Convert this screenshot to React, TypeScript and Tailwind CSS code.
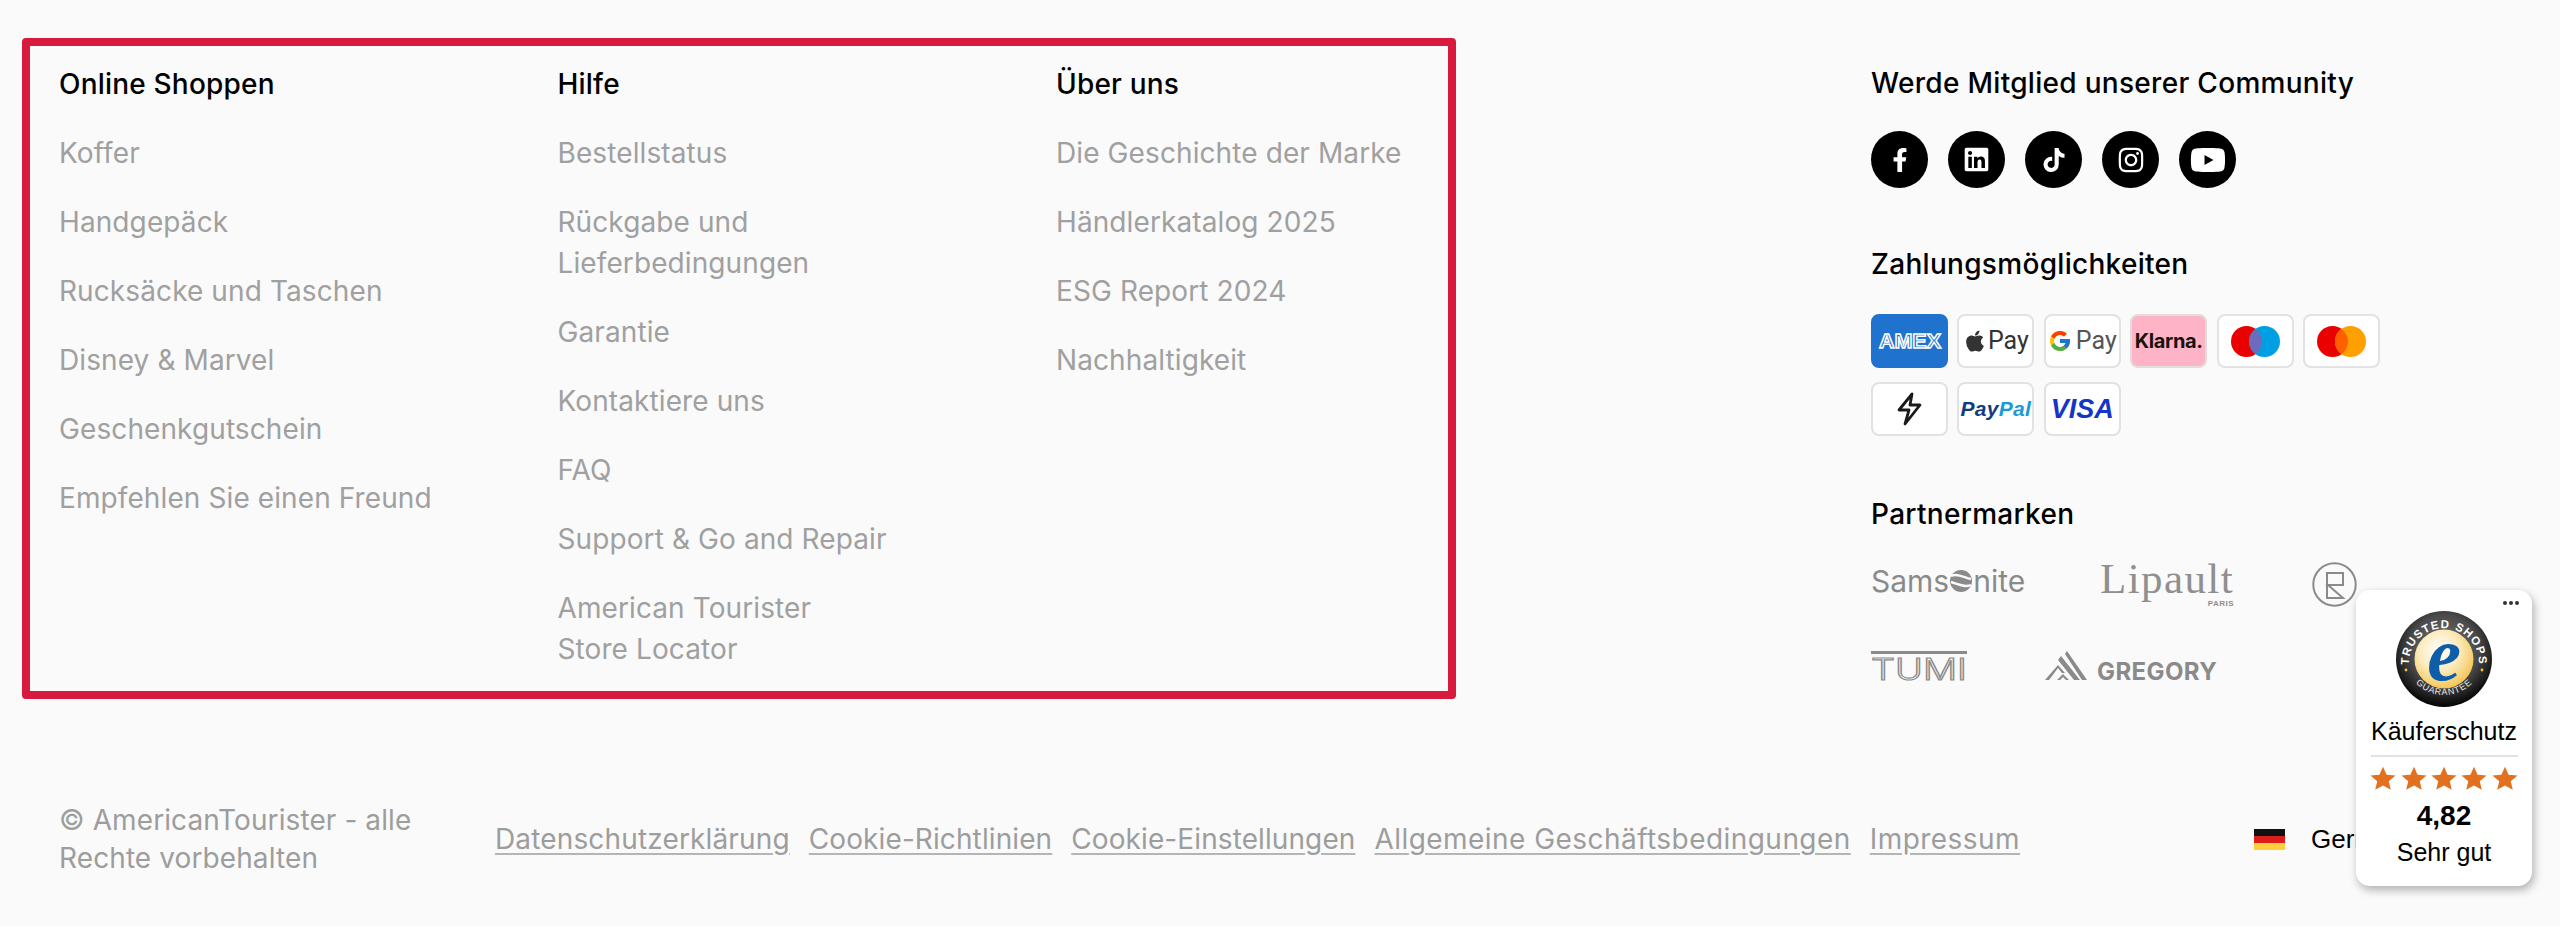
import { FaApple, FaFacebookF, FaInstagram, FaLinkedin, FaTiktok, FaYoutube } from 'react-icons/fa';
import { FcGoogle } from 'react-icons/fc';
import type { ReactNode } from 'react';

const columns = [
  {
    title: 'Online Shoppen',
    links: ['Koffer', 'Handgepäck', 'Rucksäcke und Taschen', 'Disney & Marvel', 'Geschenkgutschein', 'Empfehlen Sie einen Freund'],
  },
  {
    title: 'Hilfe',
    links: [
      'Bestellstatus',
      'Rückgabe und\nLieferbedingungen',
      'Garantie',
      'Kontaktiere uns',
      'FAQ',
      'Support & Go and Repair',
      'American Tourister\nStore Locator',
    ],
  },
  {
    title: 'Über uns',
    links: ['Die Geschichte der Marke', 'Händlerkatalog 2025', 'ESG Report 2024', 'Nachhaltigkeit'],
  },
];

const legal = [
  { label: 'Datenschutzerklärung', tracking: 'tracking-[0.15px]' },
  { label: 'Cookie-Richtlinien', tracking: 'tracking-[0.1px]' },
  { label: 'Cookie-Einstellungen', tracking: 'tracking-[0.1px]' },
  { label: 'Allgemeine Geschäftsbedingungen', tracking: 'tracking-[0.45px]' },
  { label: 'Impressum', tracking: 'tracking-[0.45px]' },
];

const socials = [
  <FaFacebookF key="fb" size={24} />,
  <FaLinkedin key="li" size={27} />,
  <FaTiktok key="tt" size={24} />,
  <FaInstagram key="ig" size={28} />,
  <FaYoutube key="yt" size={36} />,
];

function PayCard({ children, className = 'bg-white border-[#e2e2e2]' }: { children: ReactNode; className?: string }) {
  return (
    <div className={`w-[77px] h-[54px] rounded-[8px] border-2 flex items-center justify-center overflow-hidden ${className}`}>
      {children}
    </div>
  );
}

function Circles({ left, right, mid }: { left: string; right: string; mid: string }) {
  return (
    <svg width="49" height="31" viewBox="0 0 49 31">
      <circle cx="15.5" cy="15.5" r="15.5" fill={left} />
      <circle cx="33.5" cy="15.5" r="15.5" fill={right} />
      <path d="M24.5 2.9a15.5 15.5 0 0 1 0 25.2a15.5 15.5 0 0 1 0-25.2z" fill={mid} />
    </svg>
  );
}

function Seal() {
  return (
    <svg width="96" height="96" viewBox="0 0 96 96">
      <defs>
        <radialGradient id="ring" cx="50%" cy="40%" r="60%">
          <stop offset="0%" stopColor="#777" />
          <stop offset="60%" stopColor="#4a4a4a" />
          <stop offset="100%" stopColor="#030303" />
        </radialGradient>
        <radialGradient id="gold" cx="42%" cy="36%" r="70%">
          <stop offset="0%" stopColor="#ffffff" />
          <stop offset="50%" stopColor="#fbeabb" />
          <stop offset="100%" stopColor="#f4bf44" />
        </radialGradient>
        <path id="arcTop" d="M13.5 58a35 35 0 1 1 69 0" />
        <path id="arcBottom" d="M8 44a40 40 0 0 0 80 0" />
      </defs>
      <circle cx="48" cy="48" r="48" fill="url(#ring)" />
      <circle cx="48" cy="48" r="29.5" fill="url(#gold)" />
      <text fill="#fff" fontFamily="'Liberation Sans', sans-serif" fontWeight="700" fontSize="11.5" letterSpacing="1.2">
        <textPath href="#arcTop" startOffset="50%" textAnchor="middle">
          TRUSTED SHOPS
        </textPath>
      </text>
      <text fill="#e8e8e8" fontFamily="'Liberation Sans', sans-serif" fontSize="9" letterSpacing="0.8">
        <textPath href="#arcBottom" startOffset="50%" textAnchor="middle">
          GUARANTEE
        </textPath>
      </text>
      <circle cx="10" cy="59" r="1.4" fill="#f4bf44" />
      <circle cx="86" cy="59" r="1.4" fill="#f4bf44" />
      <text x="48" y="69" textAnchor="middle" fill="#0c5ea8" fontFamily="'Liberation Serif', serif" fontStyle="italic" fontWeight="700" fontSize="76">
        e
      </text>
    </svg>
  );
}

function Star() {
  return (
    <svg width="26" height="25" viewBox="0 0 24 24" preserveAspectRatio="none">
      <path d="M12 .8l3.3 7.7 8.3.7-6.3 5.5 1.9 8.2L12 18.6l-7.2 4.3 1.9-8.2L.4 9.2l8.3-.7z" fill="#e2701f" />
    </svg>
  );
}

function TrustBadge() {
  return (
    <div className="absolute left-[2356px] top-[590px] w-[176px] h-[296px] bg-white rounded-[14px] shadow-[2px_4px_10px_rgba(0,0,0,0.3)] font-['Liberation_Sans',sans-serif] text-black flex flex-col items-center">
      <div className="self-end flex gap-[2px] mt-[11px] mr-[13px]">
        <span className="w-[4px] h-[4px] rounded-full bg-[#333]" />
        <span className="w-[4px] h-[4px] rounded-full bg-[#333]" />
        <span className="w-[4px] h-[4px] rounded-full bg-[#333]" />
      </div>
      <div className="mt-[6px] h-[96px]">
        <Seal />
      </div>
      <div className="mt-[4px] text-[25px] leading-[40px]">Käuferschutz</div>
      <div className="mt-[4px] w-[147px] h-[2px] shrink-0 bg-[#e2e2e2]" />
      <div className="mt-[9px] flex gap-[4.3px]">
        <Star />
        <Star />
        <Star />
        <Star />
        <Star />
      </div>
      <div className="mt-[6px] text-[28px] leading-[38px] font-bold">4,82</div>
      <div className="mt-[1px] text-[25px] leading-[32px]">Sehr gut</div>
    </div>
  );
}

export default function App() {
  return (
    <div className="relative w-[2560px] h-[926px] overflow-hidden bg-[#fafafa] font-['Inter',sans-serif]">
      <div className="flex pt-[38px] pl-[22px]">
        {/* Link columns */}
        <div className="w-[1434px] h-[661px] border-[8px] border-[#d71a3e] rounded-[4px] pl-[29px] pt-[18px] flex">
          {columns.map((col) => (
            <div key={col.title} className="w-[498.5px] flex flex-col gap-[28px] shrink-0">
              <h3 className="text-[28px] leading-[41px] font-medium text-black tracking-[0.2px] whitespace-nowrap">{col.title}</h3>
              {col.links.map((link) => (
                <a key={link} className="text-[28px] leading-[41px] text-[#a0a0a0] tracking-[0.1px] whitespace-pre-line">
                  {link}
                </a>
              ))}
            </div>
          ))}
        </div>

        {/* Right column */}
        <div className="ml-[415px] w-[520px]">
          <h3 className="text-[28px] leading-[40px] font-medium text-black tracking-[0.3px] mt-[25px] whitespace-nowrap">Werde Mitglied unserer Community</h3>
          <div className="flex gap-[20px] mt-[28px]">
            {socials.map((icon, i) => (
              <div key={i} className="w-[57px] h-[57px] rounded-full bg-black text-white flex items-center justify-center">
                {icon}
              </div>
            ))}
          </div>

          <h3 className="text-[28px] leading-[40px] font-medium text-black tracking-[0.3px] mt-[56px]">Zahlungsmöglichkeiten</h3>
          <div className="flex flex-wrap gap-x-[9.4px] gap-y-[14px] mt-[30px] w-[540px]">
            <PayCard className="bg-[#1f72cd] border-[#1f72cd]">
              <svg width="68" height="24" viewBox="0 0 68 24">
                <text x="34" y="19" textAnchor="middle" fontFamily="'Liberation Sans', sans-serif" fontWeight="700" fontSize="20" fill="#1f72cd" stroke="#fff" strokeWidth="1.4" textLength="62" lengthAdjust="spacingAndGlyphs">
                  AMEX
                </text>
              </svg>
            </PayCard>
            <PayCard>
              <span className="flex items-center gap-[1px] text-[#333] text-[25px] font-['Roboto',sans-serif]">
                <FaApple size={24} />
                Pay
              </span>
            </PayCard>
            <PayCard>
              <span className="flex items-center gap-[4px] text-[#555] text-[25px] font-['Roboto',sans-serif]">
                <FcGoogle size={24} />
                Pay
              </span>
            </PayCard>
            <PayCard className="bg-[#ffb3c7] border-[#e2dcdc]">
              <span className="text-[20px] font-bold text-[#17120f] tracking-[-0.4px]">Klarna.</span>
            </PayCard>
            <PayCard>
              <Circles left="#eb0000" right="#009ee3" mid="#6c6bbd" />
            </PayCard>
            <PayCard>
              <Circles left="#eb0000" right="#ffa000" mid="#ff5f00" />
            </PayCard>
            <PayCard>
              <svg width="25" height="34" viewBox="0 0 25 34">
                <path d="M15 2L2 18h10L8 32l15-19H13z" fill="none" stroke="#1a1a1a" strokeWidth="2.8" strokeLinejoin="round" />
              </svg>
            </PayCard>
            <PayCard>
              <span className="font-['Liberation_Sans',sans-serif] font-bold italic text-[21px] tracking-[0.3px]">
                <span className="text-[#123a80]">Pay</span>
                <span className="text-[#1a9ad8]">Pal</span>
              </span>
            </PayCard>
            <PayCard>
              <span className="font-['Liberation_Sans',sans-serif] font-bold italic text-[27px] text-[#1534c8]">VISA</span>
            </PayCard>
          </div>

          <h3 className="text-[28px] leading-[40px] font-medium text-black tracking-[0.3px] mt-[58px]">Partnermarken</h3>
          <div className="flex flex-wrap items-center gap-x-[78px] gap-y-[44px] mt-[20px] w-[520px] text-[#8a8a8a]">
            <div className="h-[50px] w-[153px] flex items-center text-[30px] font-normal leading-none">
              Sams
              <svg width="24" height="24" viewBox="0 0 24 24" className="shrink-0">
                <circle cx="12" cy="12" r="11" fill="#8a8a8a" />
                <path d="M2 7c6-3 12 1 20 3M22 16c-7 3-13-1-20-3" fill="none" stroke="#fafafa" strokeWidth="2.4" />
              </svg>
              nite
            </div>
            <div className="h-[50px] w-[132px] flex flex-col items-end pt-[2px] font-['Liberation_Serif',serif] text-[#8f8f8f]">
              <span className="text-[43px] leading-[42px] tracking-[1.4px]">Lipault</span>
              <span className="font-['Liberation_Sans',sans-serif] text-[8px] leading-[8px] font-bold tracking-[0.5px]">PARIS</span>
            </div>
            <svg width="45" height="45" viewBox="0 0 45 45" className="mt-[8px]">
              <circle cx="22.5" cy="22.5" r="21.2" fill="none" stroke="#8a8a8a" strokeWidth="2" />
              <path d="M15 11H31V23H16L31 36H15Z" fill="none" stroke="#8a8a8a" strokeWidth="2" />
            </svg>
            <svg width="96" height="30" viewBox="0 0 96 30">
              <rect x="0" y="0" width="96" height="3" fill="#8a8a8a" />
              <text x="48" y="29" textAnchor="middle" fontFamily="'Inter', sans-serif" fontSize="30" fontWeight="300" fill="none" stroke="#8a8a8a" strokeWidth="1.2" textLength="96" lengthAdjust="spacingAndGlyphs">
                TUMI
              </text>
            </svg>
            <div className="flex items-end gap-[8px] h-[30px]">
              <svg width="44" height="30" viewBox="0 0 44 30">
                <path d="M0 29L13 14l7 8-3 0-4-5-9 12zM12 29l6-6 6 6h-3l-3-3-3 3zM13 9l3-4 19 24h-6zM20 3l2-3 20 29h-5z" fill="#8a8a8a" />
              </svg>
              <span className="text-[24px] leading-[18px] font-bold tracking-[0.4px]">GREGORY</span>
            </div>
          </div>
        </div>
      </div>

      {/* Bottom bar */}
      <div className="flex items-center pl-[59px] mt-[102px]">
        <p className="w-[436px] pr-[50px] text-[28px] leading-[38px] text-[#9d9d9d] tracking-[0.1px]">© AmericanTourister - alle Rechte vorbehalten</p>
        <div className="flex gap-[19px] w-[1759px]">
          {legal.map((item) => (
            <a key={item.label} className={`text-[28px] leading-[38px] text-[#9d9d9d] underline underline-offset-4 decoration-[#b5b5b5] whitespace-nowrap ${item.tracking}`}>
              {item.label}
            </a>
          ))}
        </div>
        <svg width="31" height="21" viewBox="0 0 31 21" className="shrink-0">
          <rect width="31" height="7" fill="#111" />
          <rect y="7" width="31" height="7" fill="#dd1c1c" />
          <rect y="14" width="31" height="7" fill="#ffce3d" />
        </svg>
        <span className="ml-[26px] text-[26px] text-black font-['Liberation_Sans',sans-serif] whitespace-nowrap">Germany</span>
      </div>

      <TrustBadge />
    </div>
  );
}
